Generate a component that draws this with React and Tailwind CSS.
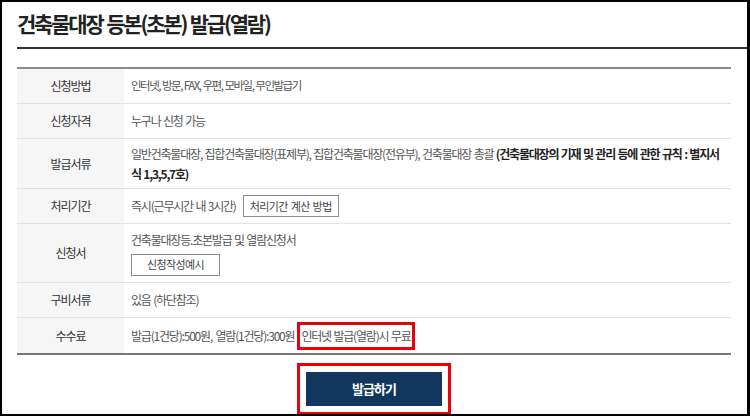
const rows = [
  { label: '신청방법', h: 'h-[35px]' },
  { label: '신청자격', h: 'h-[35px]' },
  { label: '발급서류', h: 'h-[50px]' },
  { label: '처리기간', h: 'h-[35px]' },
  { label: '신청서', h: 'h-[59px]' },
  { label: '구비서류', h: 'h-[35px]' },
  { label: '수수료', h: 'h-[35px]' },
];

const methods = ['인터넷', '방문', 'FAX', '우편', '모바일', '무인발급기'];

function Cell({ index }) {
  switch (index) {
    case 0:
      return (
        <span className="text-[11.5px] tracking-[-1.5px]">
          {methods.map((m, i) => (
            <span key={m}>
              {m}
              {i < methods.length - 1 && (
                <>
                  ,<span className="inline-block w-[2px]" />
                </>
              )}
            </span>
          ))}
        </span>
      );
    case 1:
      return <span className="[word-spacing:1px]">누구나 신청 가능</span>;
    case 2:
      return (
        <p className="leading-[20px] [word-spacing:1px]">
          일반건축물대장, 집합건축물대장(표제부), 집합건축물대장(전유부), 건축물대장 총괄{' '}
          <b className="text-[#222]">(건축물대장의 기재 및 관리 등에 관한 규칙 : 별지서<br />식 1,3,5,7호)</b>
        </p>
      );
    case 3:
      return (
        <div className="flex items-center gap-[7px]">
          <span className="[word-spacing:1px]">즉시(근무시간 내 3시간)</span>
          <button className="h-[22px] w-[96px] border border-[#8c8c8c] bg-white text-[11px] tracking-[-0.6px] [word-spacing:1px] text-[#444]">
            처리기간 계산 방법
          </button>
        </div>
      );
    case 4:
      return (
        <div className="flex flex-col items-start gap-[5px]">
          <span className="[word-spacing:1px]">건축물대장등.초본발급 및 열람신청서</span>
          <button className="h-[22px] w-[89px] border border-[#8c8c8c] bg-white text-[11px] tracking-[-0.6px] text-[#444]">
            신청작성예시
          </button>
        </div>
      );
    case 5:
      return <span className="[word-spacing:1px]">있음 (하단참조)</span>;
    default:
      return (
        <div className="flex items-center">
          <span className="[word-spacing:2px]">발급(1건당):500원, 열람(1건당):300원</span>
          <span className="ml-[3px] border-[3px] border-[#e8000b] px-[1px] py-[3px] leading-[16px] [word-spacing:1px]">
            인터넷 발급(열람)시 무료
          </span>
        </div>
      );
  }
}

export default function App() {
  return (
    <div className="w-[750px] h-[416px] overflow-hidden border-2 border-r-[3px] border-black bg-white pl-[15px] pr-[16px] font-['Noto_Sans_CJK_KR',sans-serif]">
      {/* title */}
      <div className="flex h-[47px] items-center border-b-2 border-[#333] pb-[2px] mr-[-16px]">
        <h1 className="text-[21px] font-bold tracking-[-2.2px] [word-spacing:1px] text-[#222]">건축물대장 등본(초본) 발급(열람)</h1>
      </div>

      {/* info table */}
      <div className="mt-[18px] border-t-2 border-b-2 border-t-[#8a8a8a] border-b-[#777]">
        {rows.map((row, i) => (
          <div
            key={row.label}
            className={`grid grid-cols-[107px_1fr] ${row.h} ${i < rows.length - 1 ? 'border-b border-[#e2e2e2]' : ''}`}
          >
            <div className="flex items-center justify-center bg-[#f6f6f6] text-[12px] tracking-[-1px] text-[#333]">
              {row.label}
            </div>
            <div className="flex items-center pl-[7px] pr-[8px] text-[12px] tracking-[-1.2px] text-[#555]">
              <Cell index={i} />
            </div>
          </div>
        ))}
      </div>

      {/* submit */}
      <div className="mt-[8px] flex justify-center">
        <div className="border-[3px] border-[#e8000b] p-[6px]">
          <button className="h-[34px] w-[136px] bg-[#12375e] text-[13px] font-bold tracking-[-1px] text-white">
            발급하기
          </button>
        </div>
      </div>
    </div>
  );
}
